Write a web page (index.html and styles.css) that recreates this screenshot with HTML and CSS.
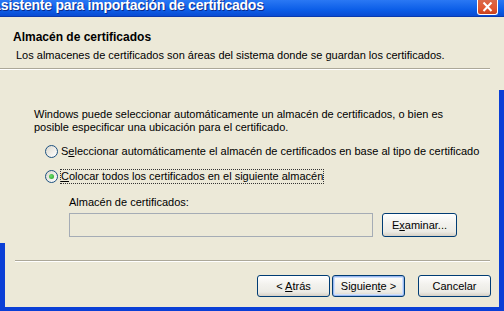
FILE: index.html
```html
<!DOCTYPE html>
<html lang="es">
<head>
<meta charset="UTF-8">
<title>Asistente para importación de certificados</title>
<link rel="stylesheet" href="styles.css">
</head>
<body>

<div class="window">
<div class="titlebar">
<span class="title">Asistente para importación de certificados</span>
<span class="close">
<svg width="11" height="10" viewBox="0 0 11 10"><path d="M1.5 0.5 L9.5 9 M9.5 0.5 L1.5 9" stroke="#fff" stroke-width="2" fill="none"/></svg>
</span>
</div>

<div class="header">
<div class="h-title">Almacén de certificados</div>
<div class="h-desc">Los almacenes de certificados son áreas del sistema donde se guardan los certificados.</div>
</div>
<div class="rule rule-top"></div>

<div class="content">
<p class="intro">Windows puede seleccionar automáticamente un almacén de certificados, o bien es<br>posible especificar una ubicación para el certificado.</p>

<div class="radio first">
<span class="circle"></span>
<span class="radio-text">S<u>e</u>leccionar automáticamente el almacén de certificados en base al tipo de certificado</span>
</div>
<div class="radio second">
<span class="circle checked"></span>
<span class="radio-text focus"><u>C</u>olocar todos los certificados en el siguiente almacén</span>
</div>

<div class="store">
<div class="store-label">Almacén de certificados:</div>
<div class="store-row">
<div class="field"></div>
<button class="btn browse">E<u>x</u>aminar...</button>
</div>
</div>
</div>

<div class="rule rule-bottom"></div>

<div class="footer">
<button class="btn">&lt; <u>A</u>trás</button>
<button class="btn default">Siguien<u>t</u>e &gt;</button>
<button class="btn cancel">Cancelar</button>
</div>
</div>

</body>
</html>
```

FILE: styles.css
```css
body {
margin: 0;
font-family: "Liberation Sans", Arial, sans-serif;
font-size: 11px;
color: #000;
}
.window {
position: relative;
width: 504px;
height: 311px;
overflow: hidden;
background: #ece9d8;
}
/* window frame pieces, only partly visible in the crop */
.window::before {
content: "";
position: absolute;
left: 0;
top: 243px;
bottom: 0;
width: 5px;
background: #0a3fd6;
}
.window::after {
content: "";
position: absolute;
right: 0;
top: 90px;
bottom: 0;
width: 5px;
background: #0a3fd6;
}
.footer::after {
content: "";
position: absolute;
left: 0;
right: 0;
bottom: 0;
height: 4px;
background: #0a3fd6;
}

.titlebar {
height: 17px;
display: flex;
justify-content: space-between;
overflow: hidden;
background: linear-gradient(#2a78f4, #0c5ee8 60%, #094bd2);
border-bottom: 1px solid #0a3aae;
box-sizing: border-box;
}
.title {
margin: -1px 0 0 -9px;
font-weight: bold;
font-size: 14px;
letter-spacing: -0.25px;
line-height: 13px;
color: #fff;
text-shadow: 1px 1px #0a2a8a;
white-space: nowrap;
}
.close {
flex: none;
width: 21px;
height: 15px;
margin-right: 6px;
box-sizing: border-box;
border: 1px solid #fff;
border-top: none;
border-radius: 0 0 3px 3px;
background: linear-gradient(#d9694a, #e2572f 60%, #c8411d);
display: flex;
align-items: flex-end;
justify-content: center;
padding-bottom: 2px;
}

.header {
height: 51px;
box-sizing: border-box;
padding: 13px 0 0 13px;
}
.h-title {
font-weight: bold;
font-size: 12px;
line-height: 14px;
}
.h-desc {
margin: 5px 0 0 3px;
line-height: 13px;
}

.rule {
height: 1px;
background: #aca899;
border-bottom: 1px solid #fff;
}
.rule-top {
width: 490px;
}
.rule-bottom {
width: 475px;
margin-left: 15px;
}

.content {
height: 190px;
box-sizing: border-box;
padding: 38px 0 0 34px;
}
.intro {
margin: 0;
line-height: 13px;
}
.radio {
display: flex;
align-items: flex-start;
height: 13px;
line-height: 13px;
padding-left: 11px;
}
.radio.first {
margin-top: 11px;
}
.radio.second {
margin-top: 12px;
}
.circle {
flex: none;
width: 13px;
height: 13px;
box-sizing: border-box;
border: 1px solid #1c5180;
border-radius: 50%;
background: linear-gradient(135deg, #dcd9ce, #fff);
margin-right: 3px;
display: flex;
align-items: center;
justify-content: center;
}
.circle.checked::after {
content: "";
width: 5px;
height: 5px;
border-radius: 50%;
background: radial-gradient(circle at 40% 40%, #6fdc6f, #21a121);
}
.focus {
outline: 1px dotted #333;
}

.store {
margin: 13px 0 0 35px;
}
.store-label {
line-height: 13px;
}
.store-row {
display: flex;
gap: 9px;
margin-top: 4px;
}
.field {
flex: none;
width: 304px;
height: 24px;
box-sizing: border-box;
border: 1px solid #a5acb5;
background: #ece9d8;
}

.btn {
flex: none;
height: 22px;
width: 73px;
padding: 0;
box-sizing: border-box;
font-family: inherit;
font-size: 11px;
color: #000;
border: 1px solid #003c74;
border-radius: 3px;
background: linear-gradient(#fff, #f3f2ee 40%, #ecebe5 80%, #d6d0c5);
}
.btn.browse {
width: 75px;
height: 24px;
}
.btn.default {
box-shadow: inset 0 0 0 1px #9bb8f0, inset 0 0 0 2px #cee0fb;
}
.footer {
display: flex;
gap: 2px;
padding: 13px 0 0 257px;
}
.btn.cancel {
margin-left: 11px;
}
```
